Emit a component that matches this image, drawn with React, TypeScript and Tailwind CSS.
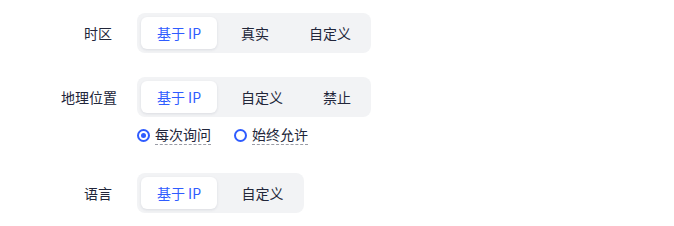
import React, { useState } from "react";

type Opt = { label: string; w: string };

function Segmented({ options, active }: { options: Opt[]; active: number }) {
  const [sel, setSel] = useState(active);
  return (
    <div className="flex gap-2 rounded-[8px] bg-[#f2f3f5] p-1">
      {options.map((o, i) => (
        <button
          key={o.label}
          onClick={() => setSel(i)}
          className={
            i === sel
              ? `${o.w} h-8 rounded-[6px] bg-white text-center text-[14px] text-[#2f5cff] shadow-[0_1px_3px_rgba(20,30,60,0.10)]`
              : `${o.w} h-8 rounded-[6px] text-center text-[14px] text-[#22263a]`
          }
        >
          {o.label}
        </button>
      ))}
    </div>
  );
}

function Label({ text, pr }: { text: string; pr: string }) {
  return (
    <div className={`w-[117px] shrink-0 text-right text-[14px] text-[#22263a] ${pr}`}>{text}</div>
  );
}

export default function App() {
  const [radio, setRadio] = useState(0);
  return (
    <div
      className="h-[226px] w-[674px] bg-white pt-[13px]"
      style={{ fontFamily: '"Noto Sans CJK SC", "Noto Sans", sans-serif' }}
    >
      <div className="flex items-center">
        <Label text="时区" pr="pr-[5px]" />
        <div className="ml-5">
          <Segmented
            active={0}
            options={[
              { label: "基于 IP", w: "w-[76px]" },
              { label: "真实", w: "w-[60px]" },
              { label: "自定义", w: "w-[74px]" },
            ]}
          />
        </div>
      </div>

      <div className="mt-6 flex items-center">
        <Label text="地理位置" pr="" />
        <div className="ml-5">
          <Segmented
            active={0}
            options={[
              { label: "基于 IP", w: "w-[76px]" },
              { label: "自定义", w: "w-[74px]" },
              { label: "禁止", w: "w-[60px]" },
            ]}
          />
        </div>
      </div>

      <div className="mt-2 flex h-5 items-center gap-[23px] pl-[137px]">
        {["每次询问", "始终允许"].map((t, i) => (
          <label key={t} className="flex cursor-pointer items-center gap-[5px]" onClick={() => setRadio(i)}>
            <span className="flex h-[13px] w-[13px] items-center justify-center rounded-full border-2 border-[#2f5cff]">
              {radio === i && <span className="h-[5px] w-[5px] rounded-full bg-[#2f5cff]" />}
            </span>
            <span className="border-b border-dashed border-[#9a9ca6] pb-[1px] text-[14px] leading-[17px] text-[#22263a]">{t}</span>
          </label>
        ))}
      </div>

      <div className="mt-7 flex items-center">
        <Label text="语言" pr="pr-[5px]" />
        <div className="ml-5">
          <Segmented
            active={0}
            options={[
              { label: "基于 IP", w: "w-[76px]" },
              { label: "自定义", w: "w-[75px]" },
            ]}
          />
        </div>
      </div>
    </div>
  );
}
